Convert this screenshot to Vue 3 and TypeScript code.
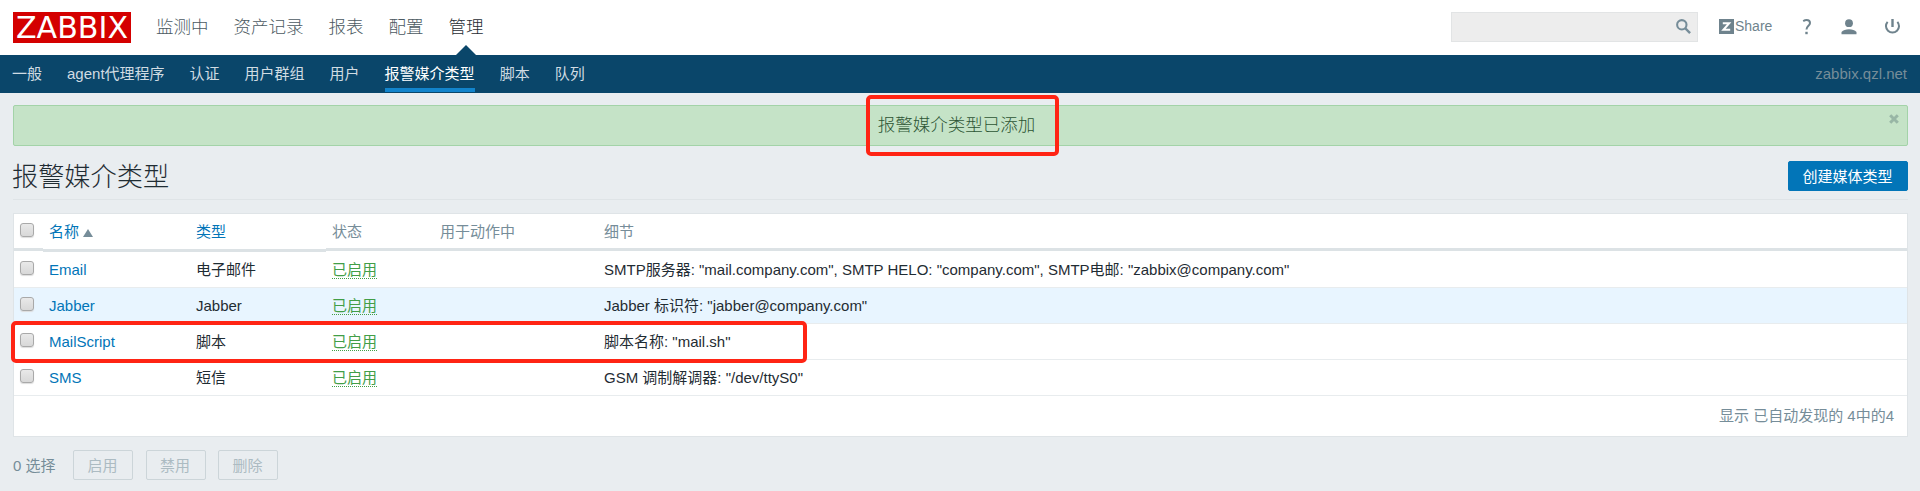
<script setup lang="ts">
interface MediaType {
  name: string
  type: string
  details: string
  hover?: boolean
  marked?: boolean
}

const mainNav: string[] = ['监测中', '资产记录', '报表', '配置', '管理']
const subNav: string[] = ['一般', 'agent代理程序', '认证', '用户群组', '用户', '报警媒介类型', '脚本', '队列']
const actions: string[] = ['启用', '禁用', '删除']
const rows: MediaType[] = [
  { name: 'Email', type: '电子邮件', details: 'SMTP服务器: "mail.company.com", SMTP HELO: "company.com", SMTP电邮: "zabbix@company.com"' },
  { name: 'Jabber', type: 'Jabber', details: 'Jabber 标识符: "jabber@company.com"', hover: true },
  { name: 'MailScript', type: '脚本', details: '脚本名称: "mail.sh"', marked: true },
  { name: 'SMS', type: '短信', details: 'GSM 调制解调器: "/dev/ttyS0"' },
]
</script>

<template>
  <div class="page">
    <header class="top">
      <svg class="logo" width="118" height="31" viewBox="0 0 118 31">
        <rect width="118" height="31" fill="#d40000" />
        <text x="3" y="26" textLength="112" lengthAdjust="spacingAndGlyphs">ZABBIX</text>
      </svg>
      <nav class="main-nav">
        <a v-for="item in mainNav" :key="item" :class="{ selected: item === '管理' }">{{ item }}</a>
      </nav>
      <div class="search">
        <svg width="15" height="15" viewBox="0 0 16 16">
          <circle cx="6.2" cy="6.2" r="5" fill="none" stroke="#768d99" stroke-width="2.2" />
          <path d="M9.6 9.6L15 15" stroke="#768d99" stroke-width="2.6" />
        </svg>
      </div>
      <a class="share">
        <svg width="15" height="15" viewBox="0 0 15 15">
          <rect width="15" height="15" fill="#6f838d" />
          <path d="M3.8 4.2H10.2L4.4 10.8H11.2" fill="none" stroke="#fff" stroke-width="2" />
        </svg>
        <span>Share</span>
      </a>
      <svg class="help" width="10" height="16" viewBox="0 0 10 16">
        <path d="M1.2 2.2Q3 1.1 4.6 1.1Q8 1.1 8 4C8 6.8 4.5 6.8 4.5 10.6" fill="none" stroke="#6f838d" stroke-width="2" />
        <rect x="3.3" y="12.8" width="2.4" height="2.4" fill="#6f838d" />
      </svg>
      <svg class="user" width="16" height="16" viewBox="0 0 16 16">
        <circle cx="8" cy="4.2" r="3.9" fill="#6f838d" />
        <path d="M.5 15.3V13Q3 10.2 8 10.2T15.5 13V15.3Z" fill="#6f838d" />
      </svg>
      <svg class="power" width="16" height="16" viewBox="0 0 16 16">
        <path d="M3.6 2.8A6.5 6.5 0 1 0 13.4 2.8" fill="none" stroke="#6f838d" stroke-width="2" />
        <path d="M8.5 0V8" stroke="#6f838d" stroke-width="2.4" />
      </svg>
    </header>

    <div class="sub">
      <nav class="sub-nav">
        <a v-for="item in subNav" :key="item" :class="{ selected: item === '报警媒介类型' }"><span>{{ item }}</span></a>
      </nav>
      <span class="server">zabbix.qzl.net</span>
    </div>

    <main>
      <div class="message">
        <span class="message-text">报警媒介类型已添加<i class="mark message-mark"></i></span>
        <svg class="close" width="10" height="10" viewBox="0 0 10 10">
          <path d="M1.2 1.2L8.8 8.8M8.8 1.2L1.2 8.8" stroke="#98b6a5" stroke-width="3" />
        </svg>
      </div>

      <div class="title">
        <h1>报警媒介类型</h1>
        <button class="create">创建媒体类型</button>
      </div>

      <section class="table">
        <div class="row head">
          <div class="cell"><i class="check"></i></div>
          <div class="cell sortable"><a>名称</a><i class="arrow"></i></div>
          <div class="cell sortable"><a>类型</a></div>
          <div class="cell">状态</div>
          <div class="cell">用于动作中</div>
          <div class="cell">细节</div>
        </div>
        <div v-for="row in rows" :key="row.name" class="row" :class="{ hover: row.hover }">
          <div class="cell"><i class="check"></i></div>
          <div class="cell"><a>{{ row.name }}</a></div>
          <div class="cell">{{ row.type }}</div>
          <div class="cell"><span class="enabled">已启用</span></div>
          <div class="cell"></div>
          <div class="cell">{{ row.details }}</div>
          <i v-if="row.marked" class="mark row-mark"></i>
        </div>
        <div class="paging">显示 已自动发现的 4中的4</div>
      </section>

      <footer class="actions">
        <span class="count">0 选择</span>
        <button v-for="action in actions" :key="action" disabled>{{ action }}</button>
      </footer>
    </main>
  </div>
</template>

<style>
body {
  margin: 0;
  background: #e9edf0;
}
</style>

<style scoped>
.page {
  height: 491px;
  overflow: hidden;
  background: #e9edf0;
  color: #1f2c33;
  font: 15px/20px "Liberation Sans", "Noto Sans CJK SC", sans-serif;
}
.page * {
  box-sizing: border-box;
}
.top {
  display: flex;
  height: 55px;
  padding: 12px 20px 0 13px;
  background: #fff;
}
.logo {
  overflow: visible;
}
.logo text {
  fill: #fff;
  font: 30px "DejaVu Sans", sans-serif;
}
.main-nav {
  display: flex;
  gap: 25px;
  margin-left: 25px;
  font-size: 17.5px;
  font-weight: 300;
  line-height: 30px;
  color: #4c5a62;
}
.main-nav .selected {
  position: relative;
  color: #1f2c33;
}
.main-nav .selected::after {
  content: "";
  position: absolute;
  left: 50%;
  top: 33px;
  margin-left: -10px;
  border: 10px solid transparent;
  border-top: 0;
  border-bottom-color: #0a466a;
}
.search {
  display: flex;
  justify-content: flex-end;
  width: 247px;
  height: 30px;
  margin-left: auto;
  padding: 6px 6px 0 0;
  border: 1px solid #e2e4e5;
  background: #ededed;
}
.share {
  display: flex;
  gap: 1px;
  width: 56px;
  margin-left: 21px;
  color: #6f838d;
  font-size: 14px;
  line-height: 28px;
}
.share svg {
  flex: none;
  margin-top: 7px;
}
.help,
.user,
.power {
  margin-top: 7px;
}
.help {
  margin-left: 27px;
}
.user {
  margin-left: 29px;
}
.power {
  margin-left: 27px;
}
.sub {
  display: flex;
  justify-content: space-between;
  height: 38px;
  padding: 0 13px 0 12px;
  background: #0a466a;
}
.sub-nav {
  display: flex;
  gap: 25px;
  color: #d0dce3;
}
.sub-nav a {
  height: 37px;
  line-height: 37px;
}
.sub-nav .selected {
  color: #fff;
  border-bottom: 4px solid #1284cc;
}
.server {
  line-height: 37px;
  color: #768d99;
}
main {
  padding: 12px 12px 0 13px;
}
.message {
  position: relative;
  height: 41px;
  border: 1px solid #a3d3a8;
  border-radius: 2px;
  background: #c5e3c7;
  text-align: center;
  font-size: 17.5px;
  font-weight: 300;
  line-height: 38px;
  color: #2d5534;
}
.message-text {
  position: relative;
  left: -4px;
}
.close {
  position: absolute;
  right: 8px;
  top: 8px;
}
.mark {
  position: absolute;
  z-index: 1;
  border: 4px solid #ff2414;
  border-radius: 5px;
}
.message-mark {
  inset: -20px -24px auto -12px;
  height: 61px;
}
.title {
  display: flex;
  justify-content: space-between;
  height: 54px;
  padding-top: 15px;
  border-bottom: 1px solid #dfe4e7;
}
h1 {
  margin: 1px 0 0 -1px;
  font-size: 26.2px;
  font-weight: 300;
  line-height: 30px;
}
button {
  height: 30px;
  padding: 0;
  border-radius: 2px;
  font: inherit;
}
.create {
  width: 120px;
  padding: 1px 1px 0 0;
  border: 1px solid #0275b8;
  background: #0275b8;
  color: #fff;
}
.table {
  margin-top: 13px;
  height: 224px;
  border: 1px solid #dfe4e7;
  background: #fff;
}
.row {
  position: relative;
  display: grid;
  grid-template-columns: 29px 147px 136px 108px 164px 1fr;
  height: 36px;
  border-bottom: 1px solid #e8ecee;
}
.cell {
  padding: 8px 0 0 6px;
  line-height: 20px;
  white-space: nowrap;
}
.head {
  height: 38px;
  border: 0;
  color: #768d99;
}
.head .cell {
  height: 37px;
  border-bottom: 3px solid #dce2e5;
}
.head .sortable {
  height: 38px;
}
.hover {
  background: #e8f5ff;
}
a {
  color: inherit;
}
.cell a {
  color: #0275b8;
}
.arrow {
  display: inline-block;
  margin-left: 4px;
  border: 5px solid transparent;
  border-top: 0;
  border-bottom: 8px solid #768d99;
}
.check {
  display: block;
  width: 14px;
  height: 14px;
  margin-top: 1px;
  border: 1px solid #a9a9a9;
  border-radius: 3px;
  background: linear-gradient(#e9e9e9, #d8d8d8);
  box-shadow: 0 1px 1px #ddd;
}
.enabled {
  display: inline-block;
  height: 19px;
  color: #429e47;
  border-bottom: 1px dotted #429e47;
}
.row-mark {
  left: -3px;
  top: -3px;
  width: 796px;
  height: 42px;
}
.paging {
  padding: 10px 13px 0 0;
  text-align: right;
  color: #768d99;
}
.actions {
  display: flex;
  margin-top: 13px;
  color: #768d99;
}
.count {
  width: 60px;
  line-height: 31px;
}
.actions button {
  width: 60px;
  margin-right: 12.5px;
  padding: 1px 1px 0 0;
  border: 1px solid #ccd5d9;
  background: transparent;
  color: #acbbc2;
}
</style>
